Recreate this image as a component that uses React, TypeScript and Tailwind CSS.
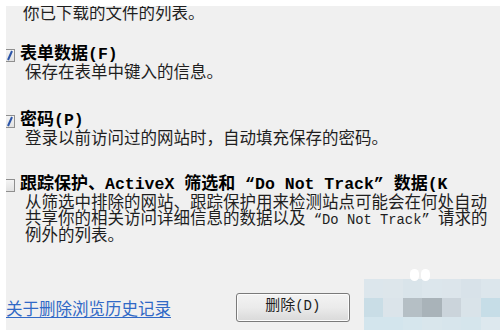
import type { ReactNode } from "react";

const FONT = { fontFamily: '"Liberation Mono", "Noto Sans CJK SC", monospace' };

const pixelRows = [
  ["#dce6ec", "#dde6eb", "#d9e4ea", "#dce6ec", "#dce5eb", "#d8e2e9", "#dce6ec"],
  ["#c9dde6", "#dbe4ea", "#b5bfc5", "#a9b3b9", "#cbd4db", "#d9e3e9", "#c6dde7"],
  ["#d3e5ed", "#d3e5ed", "#d6e6ed", "#d9e6ec", "#d7e5ec", "#d5e5ec", "#dde8ee"],
];

function Check({ checked }: { checked: boolean }) {
  return (
    <div className="relative ml-[-4px] mt-[3px] h-[13px] w-[13px] shrink-0 border border-[#8f8f8f] bg-gradient-to-b from-[#f4f4f4] to-[#e2e2e2]">
      {checked && (
        <svg width="13" height="13" viewBox="0 0 13 13" className="absolute left-[-1px] top-[-1px]">
          <path d="M6 11 L10 2" stroke="#2c55a8" strokeWidth="2" fill="none" />
        </svg>
      )}
    </div>
  );
}

function Item({ checked, title, lines }: { checked: boolean; title: ReactNode; lines: ReactNode[] }) {
  return (
    <div>
      <div className="flex items-start gap-[5px]">
        <Check checked={checked} />
        <div className="whitespace-nowrap text-[17px] font-bold leading-[18px] text-black">{title}</div>
      </div>
      <div className="pl-[19px] pt-[2px]">
        {lines.map((l, i) => (
          <div key={i} className="whitespace-nowrap text-[16.5px] leading-[16px] text-[#1e1e1e]">
            {l}
          </div>
        ))}
      </div>
    </div>
  );
}

export default function App() {
  return (
    <div className="h-[330px] w-[503px] bg-white pl-[6px] pr-[3px] pt-[6px]" style={FONT}>
      <div className="flex h-full flex-col overflow-hidden bg-[#f0f0f0]">
        <div className="mt-[1px] whitespace-nowrap pl-[17px] text-[16.5px] leading-[16px] text-[#1e1e1e]">
          你已下载的文件的列表。
        </div>

        <div className="mt-[23px] flex flex-col gap-[31px]">
          <Item
            checked
            title={<>表单数据<span className="text-[16.5px]">(F)</span></>}
            lines={["保存在表单中键入的信息。"]}
          />
          <div className="mt-[-1px]">
            <Item
              checked
              title={<>密码<span className="text-[16.5px]">(P)</span></>}
              lines={["登录以前访问过的网站时，自动填充保存的密码。"]}
            />
          </div>
          <div className="mt-[-3px]">
            <Item
              checked={false}
              title={
                <>
                  跟踪保护、<span className="text-[16.5px]">ActiveX </span>筛选和
                  <span className="text-[16.5px]"> “Do Not Track” </span>数据
                  <span className="text-[16.5px]">(K</span>
                </>
              }
              lines={[
                "从筛选中排除的网站、跟踪保护用来检测站点可能会在何处自动",
                <>
                  共享你的相关访问详细信息的数据以及<span className="text-[13.8px]"> “Do Not Track” </span>请求的
                </>,
                "例外的列表。",
              ]}
            />
          </div>
        </div>

        <div className="mt-[40px] flex items-start">
          <a className="mt-[17px] whitespace-nowrap text-[16.5px] leading-[18px] text-[#3169c6] underline underline-offset-2">
            关于删除浏览历史记录
          </a>
          <button className="ml-[65px] mt-[8px] h-[29px] w-[115px] rounded-[3px] border border-[#7a7a7a] bg-gradient-to-b from-[#f3f3f3] via-[#ebebeb] to-[#d9d9d9] text-[15px] text-[#1e1e1e] shadow-[inset_0_0_0_1px_#fcfcfc]">
            删除<span className="text-[14px]">(D)</span>
          </button>
          <div className="relative ml-[14px] mt-[-6px] flex flex-col">
            <div className="absolute left-[46px] top-[-10px] flex gap-[2px]">
              <div className="h-[12px] w-[9px] rounded-full bg-white" />
              <div className="h-[12px] w-[9px] rounded-full bg-white" />
            </div>
            {pixelRows.map((row, i) => (
              <div key={i} className="flex">
                {row.map((c, j) => (
                  <div key={j} className="h-[19px] w-[19.5px]" style={{ backgroundColor: c }} />
                ))}
              </div>
            ))}
          </div>
        </div>
      </div>
    </div>
  );
}
